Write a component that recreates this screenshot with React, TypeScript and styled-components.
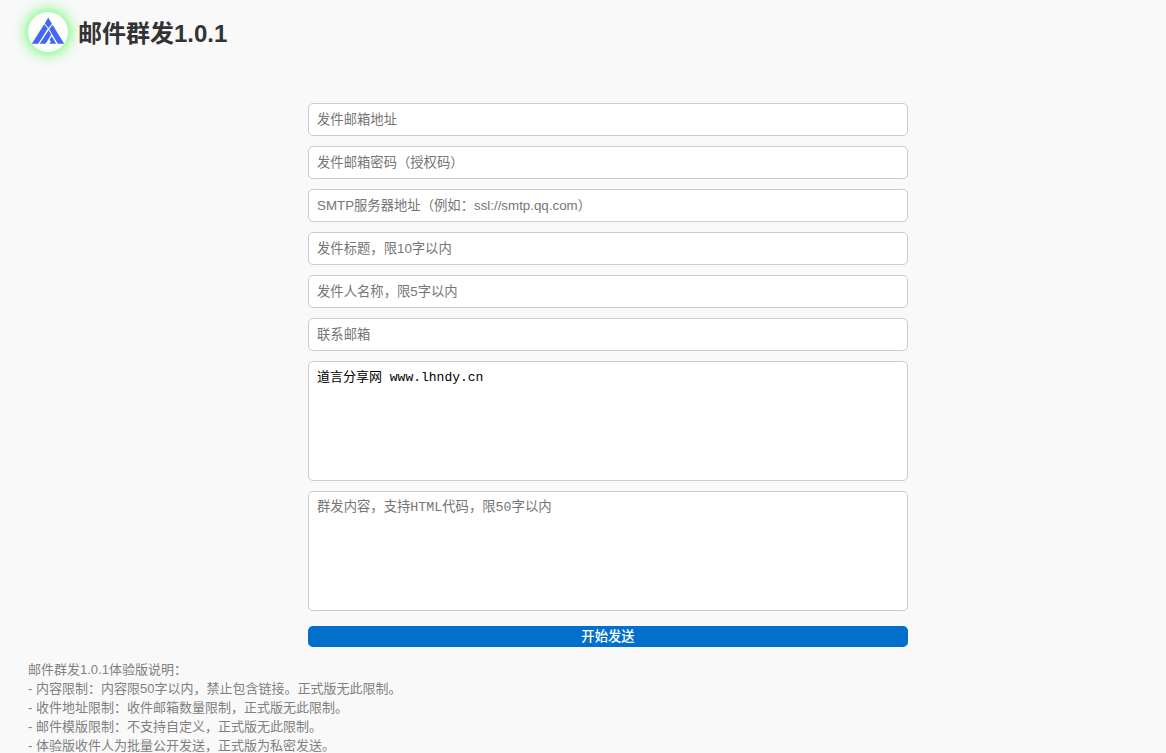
import React from "react";
import styled, { createGlobalStyle } from "styled-components";

const GlobalStyle = createGlobalStyle`
  * { box-sizing: border-box; }
  body {
    margin: 0;
    background: #f9f9f9;
    color: #333;
    font-family: "Liberation Sans", "Noto Sans CJK SC", sans-serif;
  }
`;

const Page = styled.div`
  padding: 12px 0 0 28px;
`;

const Header = styled.header`
  display: flex;
  align-items: flex-start;
  gap: 10px;
`;

const Logo = styled.svg`
  width: 40px;
  height: 40px;
  border-radius: 50%;
  background: #fff;
  box-shadow: 0 0 15px #33ff33;
`;

const Title = styled.h1`
  margin: 0;
  font-size: 24px;
  line-height: 44px;
`;

const FormArea = styled.main`
  padding: 47px 0 0 22px;
`;

const Form = styled.form`
  display: flex;
  flex-direction: column;
  gap: 10px;
  max-width: 600px;
  margin: 0 auto;
`;

const Field = styled.input`
  width: 100%;
  height: 33px;
  padding: 8px;
  border: 1px solid #ccc;
  border-radius: 5px;
  background: #fff;
  font-family: inherit;
  &::placeholder { color: #757575; }
`;

const Area = styled.textarea<{ $compact?: boolean }>`
  display: block;
  width: 100%;
  height: 120px;
  padding: 8px;
  border: 1px solid #ccc;
  border-radius: 5px;
  background: #fff;
  color: #000;
  resize: none;
  font-family: "Liberation Mono", "Noto Sans CJK SC", monospace;
  ${(p) => p.$compact && "font-size: 13px;"}
  line-height: 16px;
  &::placeholder { color: #757575; }
`;

const Submit = styled.button`
  height: 21px;
  margin-top: 5px;
  padding: 1px 0 0;
  border: 0;
  border-radius: 5px;
  background: #0070cc;
  color: #fff;
  font-family: inherit;
  font-weight: 500;
  line-height: 20px;
  cursor: pointer;
`;

const Notes = styled.footer`
  margin-top: 13px;
  color: #808080;
  font-size: 13px;
  line-height: 19px;
`;

const Note = styled.p`
  margin: 0;
`;

const fields = [
  { name: "from", type: "email", label: "发件邮箱地址" },
  { name: "password", type: "password", label: "发件邮箱密码（授权码）" },
  { name: "smtp", type: "text", label: "SMTP服务器地址（例如：ssl://smtp.qq.com）" },
  { name: "subject", type: "text", label: "发件标题，限10字以内" },
  { name: "sender", type: "text", label: "发件人名称，限5字以内" },
  { name: "contact", type: "email", label: "联系邮箱" },
];

const notes = [
  "邮件群发1.0.1体验版说明：",
  "- 内容限制：内容限50字以内，禁止包含链接。正式版无此限制。",
  "- 收件地址限制：收件邮箱数量限制，正式版无此限制。",
  "- 邮件模版限制：不支持自定义，正式版无此限制。",
  "- 体验版收件人为批量公开发送，正式版为私密发送。",
];

export default function App() {
  return (
    <>
      <GlobalStyle />
      <Page>
        <Header>
          <Logo viewBox="0 0 40 40" aria-hidden="true">
            <g fill="#4169f0">
              <path d="M20.2 5.5L24 11.8 20.6 16 16.8 11.4z" />
              <path d="M16.2 12.3L19.8 16.6 10.2 31.8H3.8z" />
              <path d="M24.5 12.7L36.2 31.8H29.8L21.2 17.2z" />
              <path d="M20.6 18.2L23.4 22.6 17.6 31.8H11.6z" />
              <path d="M23.8 24.2L28.2 31.8H21.4L22.8 29.4 21.6 27.8z" />
            </g>
          </Logo>
          <Title>邮件群发1.0.1</Title>
        </Header>
        <FormArea>
          <Form onSubmit={(e) => e.preventDefault()}>
            {fields.map((f) => (
              <Field key={f.name} name={f.name} type={f.type} placeholder={f.label} aria-label={f.label} />
            ))}
            <Area $compact name="recipients" aria-label="收件邮箱" defaultValue="道言分享网 www.lhndy.cn" />
            <Area name="content" aria-label="群发内容" placeholder="群发内容，支持HTML代码，限50字以内" />
            <Submit type="submit">开始发送</Submit>
          </Form>
        </FormArea>
        <Notes>
          {notes.map((n) => (
            <Note key={n}>{n}</Note>
          ))}
        </Notes>
      </Page>
    </>
  );
}
